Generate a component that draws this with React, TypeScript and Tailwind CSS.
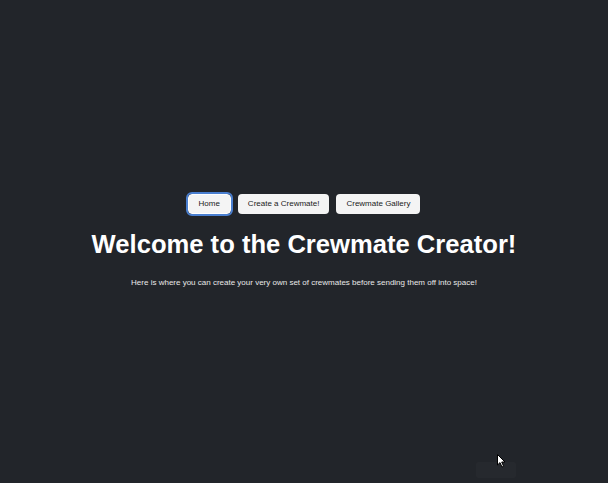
import React from "react";

export default function App() {
  return (
    <div
      className="relative min-h-screen w-full bg-[#22252a] text-white flex flex-col items-center pt-[194px]"
      style={{ fontFamily: '"Liberation Sans", Arial, sans-serif' }}
    >
      <nav className="flex gap-[7px]">
        <button className="h-[20px] px-[10px] rounded-[4px] bg-[#f4f4f4] text-[#1a1a1a] text-[8px] leading-none outline outline-2 outline-[#4a7fd0] border border-white">
          Home
        </button>
        <button className="h-[20px] px-[10px] rounded-[4px] bg-[#f4f4f4] text-[#1a1a1a] text-[8px] leading-none">
          Create a Crewmate!
        </button>
        <button className="h-[20px] px-[10px] rounded-[4px] bg-[#f4f4f4] text-[#1a1a1a] text-[8px] leading-none">
          Crewmate Gallery
        </button>
      </nav>
      <h1 className="mt-[16px] text-[25.6px] font-bold leading-[1.15]">
        Welcome to the Crewmate Creator!
      </h1>
      <p className="mt-[19px] text-[8px] leading-[1.15] text-[#e8e8e8]">
        Here is where you can create your very own set of crewmates before sending them off into space!
      </p>
      <div className="absolute left-[476px] top-[462px] w-[40px] h-[16px] bg-[#26292e] rounded-[2px]" />
      <svg className="absolute left-[497px] top-[454px]" width="10" height="14" viewBox="0 0 10 14">
        <path d="M0.5 0.5 L0.5 11 L3 8.6 L5 13 L6.6 12.3 L4.7 8 L8 8 Z" fill="#fff" stroke="#000" strokeWidth="1" />
      </svg>
    </div>
  );
}
